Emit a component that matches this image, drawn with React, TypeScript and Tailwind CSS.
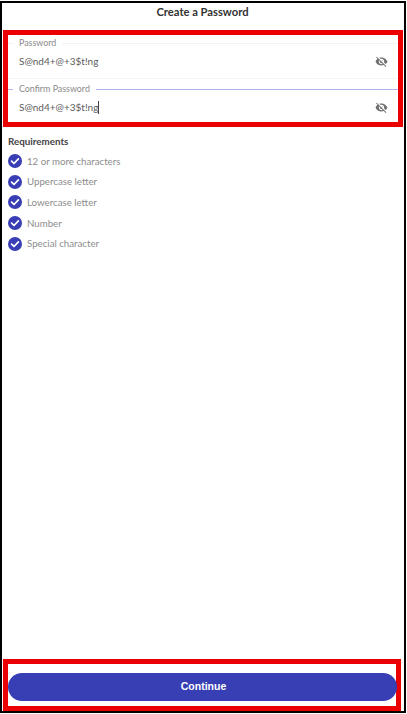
import React from "react";
import { MdVisibilityOff } from "react-icons/md";

const requirements = [
  "12 or more characters",
  "Uppercase letter",
  "Lowercase letter",
  "Number",
  "Special character",
];

const CheckBadge = () => (
  <svg viewBox="0 0 14 14" className="w-[14px] h-[14px] shrink-0">
    <circle cx="7" cy="7" r="7" fill="#3a3eb4" />
    <path
      d="M3.6 7.2l2.4 2.3 4.4-4.7"
      fill="none"
      stroke="#ffffff"
      strokeWidth="1.7"
      strokeLinecap="round"
      strokeLinejoin="round"
    />
  </svg>
);

const PasswordField = ({
  label,
  focused,
}: {
  label: string;
  focused?: boolean;
}) => (
  <div className="flex flex-col">
    <div className="flex items-center h-[14px] gap-[5px]">
      <span
        className={`w-[5px] h-px ${focused ? "bg-[#b4b4ec]" : "bg-[#f2f2f2]"}`}
      />
      <span className="text-[8.9px] leading-none text-[#8a8a8a] px-[1px]">
        {label}
      </span>
      <span
        className={`flex-1 h-px ${focused ? "bg-[#b4b4ec]" : "bg-[#f2f2f2]"}`}
      />
    </div>
    <div className="flex items-center justify-between h-[22px] pl-[11px] pr-[10px]">
      <span className="flex items-center text-[10px] text-[#5c5c5c]">
        S@nd4+@+3$t!ng
        {focused && <span className="w-px h-[13px] bg-[#444444]" />}
      </span>
      <MdVisibilityOff className="w-[13px] h-[13px] text-[#6e6e6e]" />
    </div>
  </div>
);

export default function App() {
  return (
    <div className="w-[407px] h-[714px] bg-white pt-px pr-px pb-px font-['Lato','Open_Sans',sans-serif]">
      <div className="w-full h-full flex flex-col border-[2px] border-black pr-[1px]">
        <h1 className="h-[27px] shrink-0 flex items-center justify-center pb-[8px] text-[11.2px] font-bold text-[#333333]">
          Create a Password
        </h1>

        {/* Highlighted password fields */}
        <div className="h-[97px] shrink-0 ml-px border-[5px] border-[#ea0000] flex flex-col pt-[1px]">
          <PasswordField label="Password" />
          <div className="mt-[6px] mb-[3px] h-px bg-[#f5f5f5]" />
          <PasswordField label="Confirm Password" focused />
        </div>

        <section className="flex-1 flex flex-col pl-[6px] pt-[7px]">
          <h2 className="text-[9.8px] leading-[14px] font-bold text-[#444444] mb-[6px]">
            Requirements
          </h2>
          <ul className="flex flex-col gap-[6.7px]">
            {requirements.map((item) => (
              <li key={item} className="flex items-center gap-[5px] h-[14px]">
                <CheckBadge />
                <span className="text-[9.7px] text-[#8c8c8c]">{item}</span>
              </li>
            ))}
          </ul>
        </section>

        {/* Highlighted continue button */}
        <div className="h-[52px] shrink-0 ml-px mr-[2px] border-[5px] border-[#ea0000] pt-[8px]">
          <button
            type="button"
            className="w-[389px] h-[28px] rounded-full bg-[#383eb3] pl-[2px] text-white text-[10.5px] font-bold font-['Liberation_Sans',sans-serif]"
          >
            Continue
          </button>
        </div>
      </div>
    </div>
  );
}
